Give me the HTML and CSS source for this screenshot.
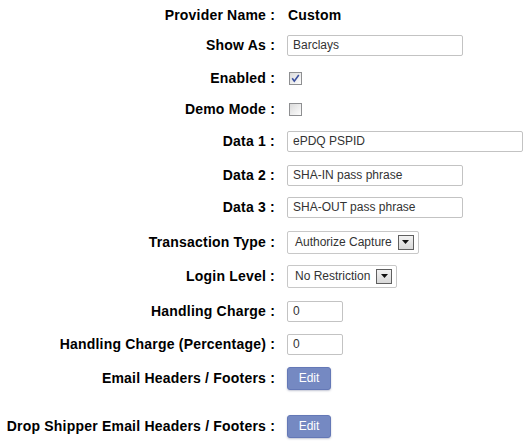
FILE: index.html
```html
<!DOCTYPE html>
<html>
<head>
<meta charset="utf-8">
<link rel="stylesheet" href="styles.css">
</head>
<body>
<div class="form">
  <div class="label">Provider Name :</div>
  <div class="value text">Custom</div>

  <div class="label">Show As :</div>
  <div class="value"><span class="input w176">Barclays</span></div>

  <div class="label">Enabled :</div>
  <div class="value">
    <svg class="check" width="13" height="13" viewBox="0 0 13 13">
      <defs><linearGradient id="g1" x1="0" y1="0" x2="1" y2="1"><stop offset="0" stop-color="#d9d9d9"/><stop offset="1" stop-color="#ffffff"/></linearGradient></defs>
      <rect x="0.5" y="0.5" width="12" height="12" fill="url(#g1)" stroke="#8e8f91"/>
      <path d="M3.2 6.2 L5.3 9.2 L9.8 3" fill="none" stroke="#3a4f9e" stroke-width="1.6"/>
    </svg>
  </div>

  <div class="label">Demo Mode :</div>
  <div class="value">
    <svg class="check" width="13" height="13" viewBox="0 0 13 13">
      <defs><linearGradient id="g2" x1="0" y1="0" x2="1" y2="1"><stop offset="0" stop-color="#d9d9d9"/><stop offset="1" stop-color="#ffffff"/></linearGradient></defs>
      <rect x="0.5" y="0.5" width="12" height="12" fill="url(#g2)" stroke="#8e8f91"/>
    </svg>
  </div>

  <div class="label">Data 1 :</div>
  <div class="value"><span class="input w236">ePDQ PSPID</span></div>

  <div class="label">Data 2 :</div>
  <div class="value"><span class="input w176">SHA-IN pass phrase</span></div>

  <div class="label">Data 3 :</div>
  <div class="value"><span class="input w176">SHA-OUT pass phrase</span></div>

  <div class="label">Transaction Type :</div>
  <div class="value"><span class="select">Authorize Capture<span class="arrow"><svg width="7" height="4" viewBox="0 0 7 4"><path d="M0 0H7L3.5 4Z" fill="#111"/></svg></span></span></div>

  <div class="label">Login Level :</div>
  <div class="value"><span class="select">No Restriction<span class="arrow"><svg width="7" height="4" viewBox="0 0 7 4"><path d="M0 0H7L3.5 4Z" fill="#111"/></svg></span></span></div>

  <div class="label">Handling Charge :</div>
  <div class="value"><span class="input w56">0</span></div>

  <div class="label">Handling Charge (Percentage) :</div>
  <div class="value"><span class="input w56">0</span></div>

  <div class="label">Email Headers / Footers :</div>
  <div class="value"><span class="btn">Edit</span></div>

  <div class="label">Drop Shipper Email Headers / Footers :</div>
  <div class="value"><span class="btn">Edit</span></div>
</div>
</body>
</html>
```

FILE: styles.css
```css
html, body {
  margin: 0;
  padding: 0;
  background: #ffffff;
}

body {
  font-family: "Liberation Sans", Arial, sans-serif;
  color: #000;
}

.form {
  display: grid;
  grid-template-columns: 275px 1fr;
  grid-template-rows: 30px 30px 36px 26px 38px 30px 34px 36px 32px 38px 28px 40px 56px;
  column-gap: 12px;
  align-items: center;
}

.label {
  text-align: right;
  font-weight: bold;
  font-size: 14px;
  line-height: 16px;
  letter-spacing: 0.2px;
  white-space: nowrap;
}

.value {
  display: flex;
  align-items: center;
}

.text {
  font-weight: bold;
  font-size: 14px;
  line-height: 16px;
  letter-spacing: 0.2px;
  padding-left: 1px;
}

.input {
  box-sizing: border-box;
  height: 21px;
  border: 1px solid #c3c3c3;
  border-radius: 2px;
  padding: 0 5px;
  font-size: 12px;
  line-height: 19px;
  color: #333;
  background: #fff;
  white-space: nowrap;
}

.w176 { width: 176px; }
.w236 { width: 236px; }
.w56 { width: 56px; }

.check {
  display: block;
  margin-left: 2px;
}

.select {
  box-sizing: border-box;
  height: 23px;
  display: inline-flex;
  align-items: center;
  border: 1px solid #c8c8c8;
  border-radius: 2px;
  padding: 0 4px 0 7px;
  font-size: 12px;
  color: #333;
  background: #fff;
  white-space: nowrap;
  gap: 6px;
}

.arrow {
  box-sizing: border-box;
  width: 16px;
  height: 15px;
  border: 1px solid #5f5f5f;
  background: linear-gradient(#f2f2f2, #d8d8d8);
  display: flex;
  align-items: center;
  justify-content: center;
}

.arrow svg {
  display: block;
}

.btn {
  box-sizing: border-box;
  width: 44px;
  height: 23px;
  display: flex;
  align-items: center;
  justify-content: center;
  background: #7589c2;
  border: 1px solid #6478b6;
  border-radius: 3px;
  color: #fff;
  font-size: 12px;
  box-shadow: 0 1px 2px rgba(80, 90, 130, 0.35);
}
```
